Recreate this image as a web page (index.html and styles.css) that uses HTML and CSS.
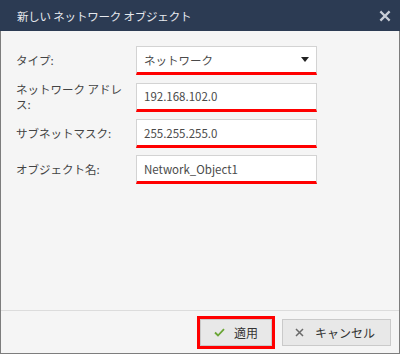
FILE: index.html
```html
<!DOCTYPE html>
<html lang="ja">
<head>
<meta charset="utf-8">
<title>新しい ネットワーク オブジェクト</title>
<link rel="stylesheet" href="styles.css">
</head>
<body>
<div class="dialog">
  <header class="titlebar">
    <span class="title">新しい ネットワーク オブジェクト</span>
    <span class="close" aria-label="閉じる">
      <svg width="12" height="12" viewBox="0 0 12 12"><path d="M2.2 2.2 L9.8 9.8 M9.8 2.2 L2.2 9.8" stroke="#c9ced7" stroke-width="2.3" stroke-linecap="square"/></svg>
    </span>
  </header>
  <main class="content">
    <div class="row">
      <label class="label">タイプ:</label>
      <div class="field select"><span>ネットワーク</span><span class="caret"></span></div>
    </div>
    <div class="row">
      <label class="label">ネットワーク アドレス:</label>
      <div class="field">192.168.102.0</div>
    </div>
    <div class="row">
      <label class="label">サブネットマスク:</label>
      <div class="field">255.255.255.0</div>
    </div>
    <div class="row">
      <label class="label">オブジェクト名:</label>
      <div class="field">Network_Object1</div>
    </div>
  </main>
  <footer class="footer">
    <button class="btn btn-apply">
      <svg width="11" height="9" viewBox="0 0 11 9"><path d="M1 4.5 L4 7.5 L10 1.2" fill="none" stroke="#6aa535" stroke-width="1.8"/></svg>
      <span>適用</span>
    </button>
    <button class="btn btn-cancel">
      <svg width="9" height="9" viewBox="0 0 9 9"><path d="M1 1 L8 8 M8 1 L1 8" stroke="#6a6a6a" stroke-width="1.5"/></svg>
      <span>キャンセル</span>
    </button>
  </footer>
</div>
</body>
</html>
```

FILE: styles.css
```css
html, body {
  margin: 0;
  padding: 0;
  background: #ffffff;
}

body {
  font-family: "Noto Sans CJK JP", "Noto Sans", sans-serif;
  color: #333;
}

.dialog {
  width: 400px;
  height: 354px;
  box-sizing: border-box;
  border: 1px solid #7d7d7d;
  border-top: none;
  background: #f5f5f5;
  display: flex;
  flex-direction: column;
}

.titlebar {
  margin: 0 -1px;
  height: 31px;
  background: #2c3b53;
  display: flex;
  align-items: center;
  justify-content: space-between;
  padding: 0 9px 0 17px;
  flex: none;
}

.title {
  color: #e6e9ee;
  font-size: 11.5px;
  letter-spacing: -0.2px;
}

.close {
  display: flex;
  align-items: center;
}

.content {
  flex: 1;
  padding: 15px 0 0 15px;
  display: flex;
  flex-direction: column;
  gap: 7px;
}

.row {
  display: grid;
  grid-template-columns: 120px 181px;
  align-items: center;
}

.label {
  font-size: 11.5px;
  line-height: 15px;
  color: #444;
  padding-right: 6px;
}

.field {
  box-sizing: border-box;
  height: 29px;
  background: #ffffff;
  border: 1px solid #d3d3d3;
  border-bottom: 3px solid #ff0000;
  padding: 0 7px;
  font-size: 11.5px;
  color: #4a4a4a;
  display: flex;
  align-items: center;
}

.select {
  justify-content: space-between;
}

.caret {
  width: 0;
  height: 0;
  border-left: 4.5px solid transparent;
  border-right: 4.5px solid transparent;
  border-top: 5px solid #222;
}

.footer {
  flex: none;
  border-top: 1px solid #dcdcdc;
  padding: 8px 8px 7px 0;
  display: flex;
  justify-content: flex-end;
  gap: 10px;
}

.btn {
  box-sizing: border-box;
  height: 27px;
  background: #e8e8e8;
  border: 1px solid #cacaca;
  font-family: inherit;
  font-size: 12px;
  color: #333;
  display: flex;
  align-items: center;
  padding: 0;
  margin: 0;
}

.btn-apply {
  width: 72px;
  padding-left: 13px;
  gap: 9px;
  outline: 3px solid #ff0000;
  outline-offset: 0;
}

.btn-cancel {
  width: 109px;
  padding-left: 12px;
  gap: 11px;
}
```
